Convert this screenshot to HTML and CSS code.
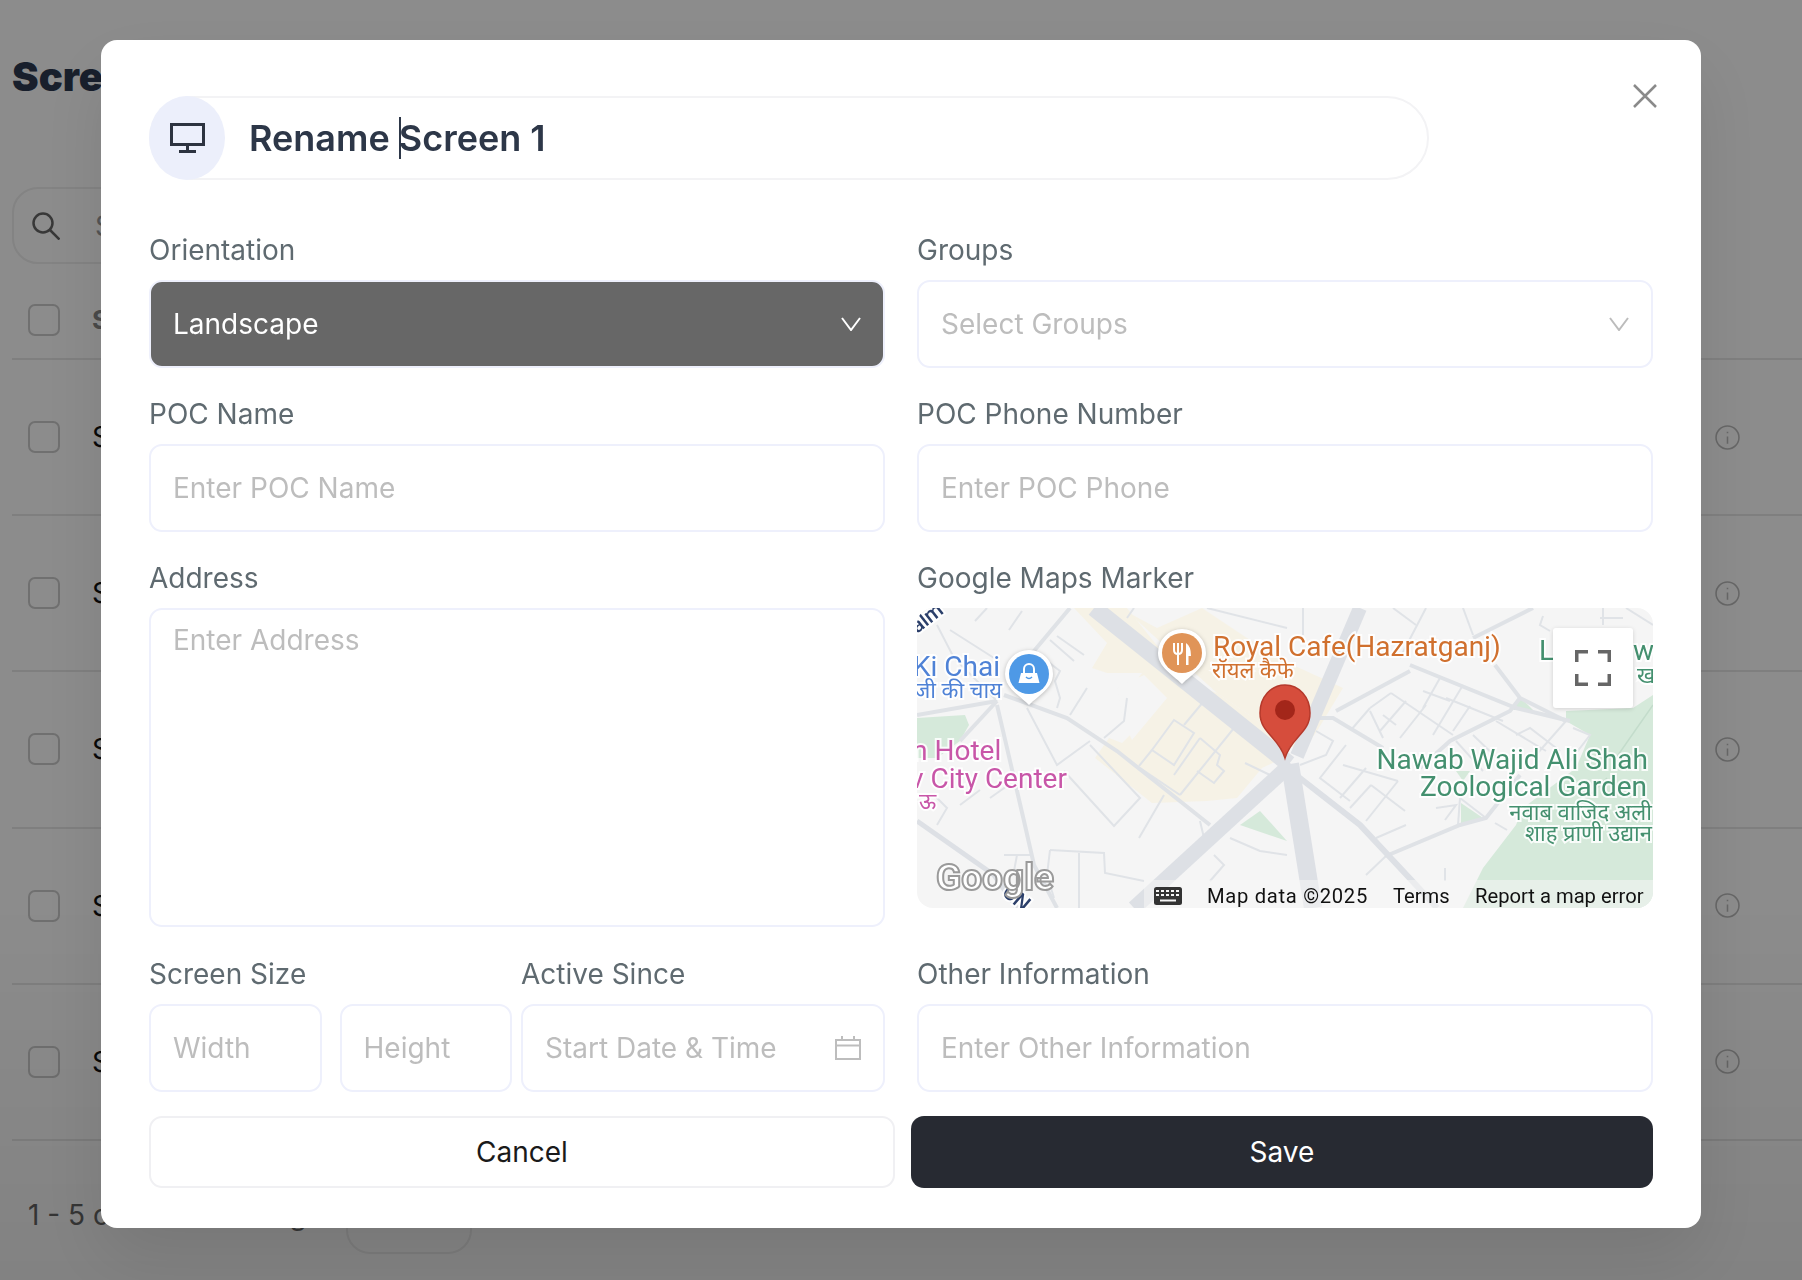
FILE: index.html
```html
<!DOCTYPE html>
<html>

<head>
	<meta charset="UTF-8">
	<title>Screens</title>
	<link rel="stylesheet" href="styles.css">
</head>

<body>
	<main class="page">
		<h1 class="page-title">Screens</h1>
		<div class="search">
			<svg class="search-icon" viewBox="0 0 28 28"><circle cx="11" cy="11" r="9.500"/><path d="M18 18l9.500 9.500"/></svg>
			<span>Search</span>
		</div>
		<div class="table-head">
			<span class="check"></span>
			<span class="head-name">Screen</span>
		</div>
		<div class="row"><span class="check"></span><span class="row-name">Screen 1</span><svg class="info" viewBox="0 0 24 24"><circle cx="12" cy="12" r="11"/><path d="M12 11v7M12 6.500v1.500"/></svg></div>
		<div class="row"><span class="check"></span><span class="row-name">Screen 2</span><svg class="info" viewBox="0 0 24 24"><circle cx="12" cy="12" r="11"/><path d="M12 11v7M12 6.500v1.500"/></svg></div>
		<div class="row"><span class="check"></span><span class="row-name">Screen 3</span><svg class="info" viewBox="0 0 24 24"><circle cx="12" cy="12" r="11"/><path d="M12 11v7M12 6.500v1.500"/></svg></div>
		<div class="row"><span class="check"></span><span class="row-name">Screen 4</span><svg class="info" viewBox="0 0 24 24"><circle cx="12" cy="12" r="11"/><path d="M12 11v7M12 6.500v1.500"/></svg></div>
		<div class="row"><span class="check"></span><span class="row-name">Screen 5</span><svg class="info" viewBox="0 0 24 24"><circle cx="12" cy="12" r="11"/><path d="M12 11v7M12 6.500v1.500"/></svg></div>
		<div class="pager">
			<span class="pager-text">1 - 5 of 5&nbsp;&nbsp;&nbsp;Remaining</span>
			<span class="pager-select"></span>
		</div>
	</main>

	<div class="overlay"></div>

	<section class="modal">
		<svg class="close" viewBox="0 0 24 24"><path d="M1 1l22 22M23 1L1 23"/></svg>

		<div class="name-row">
			<span class="name-icon">
				<svg viewBox="0 0 35 30"><rect x="1.500" y="1.500" width="32" height="20"/><path d="M17.500 22v6M9 28.500h17"/></svg>
			</span>
			<span class="name-text">Rename <i class="caret"></i>Screen 1</span>
		</div>

		<div class="form-grid">
			<div class="field">
				<label>Orientation</label>
				<div class="select select-dark">
					<span>Landscape</span>
					<svg class="chevron" viewBox="0 0 20 14"><path d="M1 1l9 12 9-12"/></svg>
				</div>
			</div>
			<div class="field">
				<label>Groups</label>
				<div class="select">
					<span>Select Groups</span>
					<svg class="chevron" viewBox="0 0 20 14"><path d="M1 1l9 12 9-12"/></svg>
				</div>
			</div>
			<div class="field">
				<label>POC Name</label>
				<input class="input" placeholder="Enter POC Name">
			</div>
			<div class="field">
				<label>POC Phone Number</label>
				<input class="input" placeholder="Enter POC Phone">
			</div>
			<div class="field">
				<label>Address</label>
				<textarea class="input area" placeholder="Enter Address"></textarea>
			</div>
			<div class="field">
				<label>Google Maps Marker</label>
				<div class="map">
					<svg viewBox="0 0 736 300" width="736" height="300">
						<rect width="736" height="300" fill="#f5f5f5"/>

						<path fill="#f6f2e6" d="M157 0 190 35 175 60 190 65 225 65 210 85 232 108 205 135 192 130 178 150 235 195 290 193 320 190 345 160 366 150V130L300 85 270 75 210 0Z"/>
						<path fill="#f6f2e6" d="M212 5 240 20 285 0 330 30 376 57 426 80 400 123 383 147 366 130 300 85 250 40Z"/>
						<path fill="#f5f5f5" d="M200 80 227 67 250 90 215 132 205 110Z"/>

						<path fill="#d5e9da" d="M649 103 716 100 736 87V300H546L566 260 599 217 606 200 659 160 673 127 649 113Z"/>
						<path fill="#d5e9da" d="M0 110 48 107 52 117 43 133 20 150H0Z"/>
						<path fill="#d5e9da" d="M343 203 370 233 323 217Z"/>
						<path fill="#d5e9da" d="M604 90 616 102H596Z"/>
						<path fill="#d5e9da" d="M544 195 566 210 544 217Z"/>
						<path fill="#d5e9da" d="M539 163H553L546 173Z"/>
						<path fill="none" stroke="#c3dccb" stroke-width="1.500" d="M736 97 699 150M690 170 660 200"/>

						<g class="street">
							<path d="M20 17 37 50 80 93"/>
							<path d="M33 22 77 50"/>
							<path d="M58 13 70 0M92 22 105 3"/>
							<path d="M110 100 140 157 173 133"/>
							<path d="M170 80 153 107"/>
							<path d="M173 137 223 190 197 218 147 163"/>
							<path d="M247 187 222 230"/>
							<path d="M210 90 207 113 187 130"/>
							<path d="M257 112 277 125 257 157 235 142Z"/>
							<path d="M235 142 222 158"/>
							<path d="M287 93 267 117"/>
							<path d="M223 160 263 187"/>
							<path d="M283 130 257 167"/>
							<path d="M283 130 303 147 300 157 307 163 297 175 280 163"/>
							<path d="M317 120 263 187"/>
							<path d="M133 242 187 245 188 265 227 273"/>
							<path d="M133 242 130 267 137 290"/>
							<path d="M162 245V300"/>
							<path d="M283 213 287 230"/>
							<path d="M297 247 307 257 293 273"/>
							<path d="M313 230 343 243 370 247"/>
							<path d="M328 155 353 167"/>
							<path d="M87 247H113M100 247 97 263"/>
							<path d="M133 32 157 53M140 28 167 47"/>
							<path d="M117 43 143 63 138 73 143 90 140 100"/>
							<path d="M290 0 370 20"/>
							<path d="M20 217 30 200 17 187M43 197 63 182M73 190 90 178"/>
							<path d="M210 10 217 0"/>

							<path d="M386 0V27"/>
							<path d="M476 0 499 17"/>
							<path d="M509 0 483 50"/>
							<path d="M546 0 556 27"/>
							<path d="M683 10H706M686 0V17"/>
							<path d="M709 0 736 17"/>
							<path d="M626 8 623 17 633 23"/>
							<path d="M474 85 536 127"/>
							<path d="M453 100 474 85"/>
							<path d="M434 122 453 100"/>
							<path d="M453 103 466 130"/>
							<path d="M489 93 463 123"/>
							<path d="M466 107 479 117"/>
							<path d="M509 97 483 130"/>
							<path d="M523 70 506 100"/>
							<path d="M546 77 516 127"/>
							<path d="M506 83 533 93"/>
							<path d="M529 90 586 113"/>
							<path d="M553 98 536 123"/>
							<path d="M579 113 629 143"/>
							<path d="M599 127 613 120 643 143"/>
							<path d="M649 113 619 147"/>
							<path d="M656 120 673 127 650 157"/>
							<path d="M556 127 583 153"/>
							<path d="M539 133 566 163"/>
							<path d="M399 123 416 133 409 147 383 157"/>
							<path d="M429 137 403 170 433 193"/>
							<path d="M449 160 423 190"/>
							<path d="M454 177 433 200"/>
							<path d="M426 157 481 173"/>
							<path d="M481 173 449 213"/>
							<path d="M454 177 488 203"/>
							<path d="M459 230 489 217"/>
							<path d="M543 190 541 217"/>
							<path d="M543 190 569 210"/>
							<path d="M449 267 469 248"/>
							<path d="M519 200 539 197 528 212"/>
							<path d="M528 260V273"/>
							<path d="M578 215 590 222"/>
						</g>

						<g class="street wide">
							<path d="M87 87 150 110 200 143 293 217"/>
							<path d="M0 107 80 93"/>
							<path d="M80 97 107 213 117 257 140 300"/>
							<path d="M80 93 43 133"/>
							<path d="M153 0 117 43 93 70"/>
							<path d="M403 110H416L466 140"/>
							<path d="M419 103 493 63"/>
							<path d="M493 57 599 100 653 113"/>
							<path d="M578 57 603 90 649 113"/>
							<path d="M603 90 593 103 533 133 503 160"/>
							<path d="M469 248 543 217 569 210 603 167"/>
							<path d="M556 30 616 0"/>
						</g>

						<g class="road">
							<path d="M177 0 372 156" stroke-width="17"/>
							<path d="M443 0 380 148" stroke-width="14"/>
							<path d="M374 156 217 300" stroke-width="15"/>
							<path d="M373 156 396 300" stroke-width="18"/>
							<path d="M379 167 443 217 499 277 520 300" stroke-width="6"/>
							<path d="M0 213 77 267 100 300" stroke-width="5"/>
						</g>

						<text class="map-label road-name" transform="translate(0 26) rotate(-38)">alm</text>
						<text class="map-label road-name" transform="translate(84 286) rotate(40)">CN</text>

						<text class="map-label cafe" x="296" y="48">Royal Cafe(Hazratganj)</text>
						<text class="map-label cafe small" x="295" y="70">रॉयल कैफे</text>
						<text class="map-label shop" x="-4" y="68">Ki Chai</text>
						<text class="map-label shop small" x="-3" y="90">जी की चाय</text>
						<text class="map-label hotel" x="-14" y="152">m Hotel</text>
						<text class="map-label hotel" x="-7" y="180">v City Center</text>
						<text class="map-label hotel small" x="2" y="201">ऊ</text>
						<text class="map-label park end" x="731" y="161">Nawab Wajid Ali Shah</text>
						<text class="map-label park end" x="730" y="188">Zoological Garden</text>
						<text class="map-label park small end" x="735" y="212">नवाब वाजिद अली</text>
						<text class="map-label park small end" x="735" y="233">शाह प्राणी उद्यान</text>
						<text class="map-label park" x="622" y="52">L</text>
						<text class="map-label park" x="716" y="52">w</text>
						<text class="map-label park small" x="720" y="75">ख</text>

						<g class="pin">
							<path fill="#fff" d="M265 21a24 24 0 0 1 24 24c0 14-14 21-24 31-10-10-24-17-24-31a24 24 0 0 1 24-24Z"/>
							<circle cx="265" cy="45" r="20" fill="#e09458"/>
							<path fill="none" stroke="#fff" stroke-width="2" d="M257 35v7q0 4 4 4t4-4v-7M261 35v22"/>
							<path fill="#fff" d="M269 57V35q5 3 5 13h-2.500v9Z"/>
						</g>

						<g class="pin">
							<path fill="#fff" d="M112 42a24 24 0 0 1 24 24c0 14-14 21-24 31-10-10-24-17-24-31a24 24 0 0 1 24-24Z"/>
							<circle cx="112" cy="66" r="20" fill="#4e99e6"/>
							<path fill="#fff" d="M104 65h16l2.500 10h-21Z"/>
							<path fill="none" stroke="#fff" stroke-width="2" d="M107 65v-4a5 5 0 0 1 10 0v4"/>
							<path fill="none" stroke="#4e99e6" stroke-width="1.500" d="M109 69q3 3 6 0"/>
						</g>

						<path fill="#d64d3c" stroke="#b5392b" stroke-width="1.500" d="M368 77c14 0 25 12 25 28 0 20-19 24-25 45-6-21-25-25-25-45 0-16 11-28 25-28Z"/>
						<circle cx="368" cy="102" r="10" fill="#a3261a"/>

						<text class="google" x="19" y="282">Google</text>

						<rect x="227" y="272" width="509" height="28" fill="#f5f5f5" fill-opacity=".55"/>
						<rect x="237" y="279" width="28" height="18" rx="2.500" fill="#333"/>
						<path class="keys" d="M239 283H263M239 287H263"/>
						<path fill="none" stroke="#f5f5f5" stroke-width="2" d="M243 292.500H259"/>
						<text class="attrib wide-text" x="290" y="295">Map data ©2025</text>
						<text class="attrib" x="476" y="295">Terms</text>
						<text class="attrib" x="558" y="295">Report a map error</text>

						<rect class="map-button" x="636" y="20" width="80" height="80" rx="3" fill="#fff"/>
						<path fill="none" stroke="#666" stroke-width="3.500" d="M659.750 54V43.750H671M681 43.750H692.250V54M692.250 66V76.250H681M671 76.250H659.750V66"/>
					</svg>
				</div>
			</div>
			<div class="field">
				<div class="size-row">
					<div class="size-col">
						<label>Screen Size</label>
						<div class="size-inputs">
							<input class="input" placeholder="Width">
							<input class="input" placeholder="Height">
						</div>
					</div>
					<div class="date-col">
						<label>Active Since</label>
						<div class="select date">
							<span>Start Date &amp; Time</span>
							<svg class="calendar" viewBox="0 0 26 24"><path d="M1 4h24v19H1ZM1 9.500h24M7 0v4M19 0v4"/></svg>
						</div>
					</div>
				</div>
			</div>
			<div class="field">
				<label>Other Information</label>
				<input class="input" placeholder="Enter Other Information">
			</div>
		</div>

		<div class="actions">
			<button class="btn btn-cancel">Cancel</button>
			<button class="btn btn-save">Save</button>
		</div>
	</section>
</body>

</html>
```

FILE: styles.css
```css
* {
	box-sizing: border-box;
}

html,
body {
	width: 100%;
	height: 100%;
	margin: 0;
	overflow: hidden;
}

body {
	background: #fff;
	font-family: Inter, "Noto Sans", sans-serif;
	color: #111;
}

/* page behind the dialog */
.page {
	padding: 52px 0 0 12px;
}

.page-title {
	margin: 0;
	font-size: 40px;
	line-height: 50px;
	font-weight: 900;
	color: #2c3950;
}

.search {
	display: flex;
	align-items: center;
	gap: 35px;
	width: 600px;
	height: 77px;
	margin-top: 85px;
	padding-left: 18px;
	border: 2px solid #eee;
	border-radius: 26px;
	font-size: 28px;
	color: #999;
}

.search-icon {
	width: 28px;
	height: 28px;
	fill: none;
	stroke: #666;
	stroke-width: 2.500;
}

.table-head {
	display: flex;
	align-items: center;
	gap: 32px;
	height: 96px;
	padding: 17px 0 0 16px;
	border-bottom: 2px solid #e8e8e8;
	font-size: 26px;
	font-weight: 700;
	color: #888;
}

.check {
	width: 32px;
	height: 32px;
	border: 2px solid #ccc;
	border-radius: 7px;
}

.row {
	display: flex;
	align-items: center;
	gap: 32px;
	height: 156.200px;
	padding: 0 62px 0 16px;
	border-bottom: 2px solid #e8e8e8;
	font-size: 28px;
}

.row-name {
	flex: 1;
}

.info {
	width: 25px;
	height: 25px;
	fill: none;
	stroke: #bbb;
	stroke-width: 1.500;
}

.pager {
	display: flex;
	align-items: flex-start;
	margin-top: 57px;
	padding-left: 16px;
	font-size: 28px;
	color: #666;
}

.pager-text {
	width: 318px;
	white-space: nowrap;
}

.pager-select {
	width: 126px;
	height: 56px;
	border: 2px solid #eee;
	border-radius: 24px;
}

.overlay {
	position: fixed;
	inset: 0;
	background: linear-gradient(rgba(0, 0, 0, .45) 70%, rgba(0, 0, 0, .49) 100%);
}

/* dialog */
.modal {
	position: fixed;
	top: 40px;
	left: 101px;
	width: 1600px;
	height: 1188px;
	padding: 56px 48px 40px;
	background: #fff;
	border-radius: 16px;
	box-shadow: 0 30px 70px rgba(0, 0, 0, .1);
}

.close {
	position: absolute;
	top: 44px;
	left: 1532px;
	width: 24px;
	height: 24px;
	fill: none;
	stroke: #8a8a8a;
	stroke-width: 2.500;
}

.name-row {
	display: flex;
	align-items: center;
	gap: 24px;
	width: 1280px;
	height: 84px;
	border: 2px solid #f3f3f5;
	border-radius: 42px;
}

.name-icon {
	display: flex;
	align-items: center;
	justify-content: center;
	width: 76px;
	height: 84px;
	margin: -2px 0 -2px -2px;
	background: #eceffb;
	border-radius: 50%;
}

.name-icon svg {
	width: 35px;
	height: 30px;
	fill: none;
	stroke: #2d3340;
	stroke-width: 3;
}

.name-text {
	font-size: 36px;
	font-weight: 600;
	color: #2d3748;
}

.caret {
	display: inline-block;
	width: 2px;
	height: 42px;
	margin: 0 -2px -8px 0;
	background: #2d3748;
}

.form-grid {
	display: grid;
	grid-template-columns: 736px 736px;
	column-gap: 32px;
	margin-top: 52px;
}

.field {
	margin-bottom: 28px;
}

.field:nth-child(5),
.field:nth-child(6) {
	margin-bottom: 29px;
}

.field:nth-child(7),
.field:nth-child(8) {
	margin-bottom: 24px;
}

.field label {
	display: block;
	height: 36px;
	margin-bottom: 12px;
	font-size: 28px;
	line-height: 36px;
	color: #5f6a70;
}

.input,
.select {
	display: block;
	width: 100%;
	height: 88px;
	padding: 0 22px;
	border: 2px solid #eef0fc;
	border-radius: 13px;
	outline: none;
	background: #fff;
	font-family: Inter, "Noto Sans", sans-serif;
	font-size: 28px;
	color: #bdbdbd;
}

.input::placeholder {
	color: #bdbdbd;
	opacity: 1;
}

.select {
	display: flex;
	align-items: center;
	justify-content: space-between;
}

.select-dark {
	background: #676767;
	color: #fff;
}

.chevron {
	width: 20px;
	height: 14px;
	fill: none;
	stroke: #bcbcbc;
	stroke-width: 2;
}

.select-dark .chevron {
	stroke: #fff;
}

.area {
	height: 319px;
	padding-top: 13px;
	resize: none;
}

.map {
	height: 300px;
	border-radius: 16px;
	overflow: hidden;
}

.map svg {
	display: block;
}

.street path {
	fill: none;
	stroke: #e0e3e7;
	stroke-width: 2;
}

.street.wide path {
	stroke: #dfe2e6;
	stroke-width: 4;
}

.road path {
	fill: none;
	stroke: #dde0e5;
}

.pin {
	filter: drop-shadow(0 1px 2px rgba(0, 0, 0, .25));
}

.map-button {
	filter: drop-shadow(0 1px 2px rgba(0, 0, 0, .15));
}

.keys {
	fill: none;
	stroke: #f5f5f5;
	stroke-width: 2;
	stroke-dasharray: 3 2;
}

.map-label {
	font-family: Roboto, "Noto Sans", sans-serif;
	font-size: 28px;
	paint-order: stroke;
	stroke: #fff;
	stroke-width: 4px;
	stroke-opacity: .85;
}

.map-label.small {
	font-size: 22px;
}

.map-label.end {
	text-anchor: end;
}

.map-label.road-name {
	font-size: 21px;
	font-weight: 500;
	fill: #2b3f6a;
}

.cafe {
	fill: #d0702e;
}

.shop {
	fill: #4f82d6;
}

.hotel {
	fill: #c856a8;
}

.park {
	fill: #44906f;
}

.google {
	font-family: Roboto, "Noto Sans", sans-serif;
	font-size: 37px;
	font-weight: 700;
	fill: #fff;
	stroke: #9a9a9a;
	stroke-width: 2px;
}

.attrib {
	font-family: Roboto, sans-serif;
	font-size: 20.200px;
	fill: #111;
}

.wide-text {
	letter-spacing: .7px;
}

.size-row {
	display: flex;
	gap: 9px;
}

.size-col {
	width: 363px;
}

.size-inputs {
	display: flex;
	gap: 18px;
}

.date-col {
	flex: 1;
}

.calendar {
	width: 26px;
	height: 24px;
	fill: none;
	stroke: #bdbdbd;
	stroke-width: 2;
}

.actions {
	display: flex;
	justify-content: space-between;
}

.btn {
	height: 72px;
	border-radius: 13px;
	font-family: Inter, sans-serif;
	font-size: 28px;
}

.btn-cancel {
	width: 746px;
	background: #fff;
	border: 2px solid #f0f0f3;
	color: #1a1a1a;
}

.btn-save {
	width: 742px;
	background: #272a32;
	border: 0;
	color: #fff;
}
```
